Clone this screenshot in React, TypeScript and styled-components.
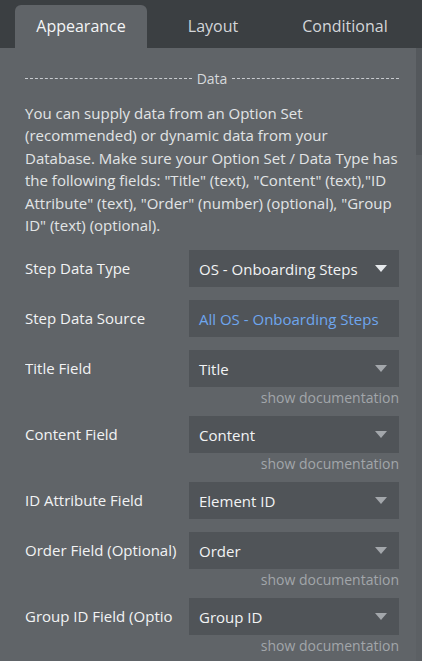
import styled, { createGlobalStyle } from 'styled-components'

const GlobalStyle = createGlobalStyle`
  * {
    box-sizing: border-box;
  }
  body {
    margin: 0;
    background: #606468;
    font-family: "Open Sans", "Noto Sans", sans-serif;
  }
`

interface IField {
  label: string
  value: string
  doc?: boolean
  link?: boolean
  bright?: boolean
  noArrow?: boolean
  clipped?: boolean
}

const fields: IField[] = [
  { label: 'Step Data Type', value: 'OS - Onboarding Steps', bright: true },
  { label: 'Step Data Source', value: 'All OS - Onboarding Steps', link: true, noArrow: true },
  { label: 'Title Field', value: 'Title', doc: true },
  { label: 'Content Field', value: 'Content', doc: true },
  { label: 'ID Attribute Field', value: 'Element ID' },
  { label: 'Order Field (Optional)', value: 'Order', doc: true },
  { label: 'Group ID Field (Optional)', value: 'Group ID', doc: true, clipped: true },
]

const descriptionLines = [
  'You can supply data from an Option Set',
  '(recommended) or dynamic data from your',
  'Database. Make sure your Option Set / Data Type has',
  'the following fields: "Title" (text), "Content" (text),"ID',
  'Attribute" (text), "Order" (number) (optional), "Group',
  'ID" (text) (optional).',
]

function App() {
  return (
    <>
      <GlobalStyle />
      <Wrapper>
        <Tabs>
          {['Appearance', 'Layout', 'Conditional'].map((tab, i) => (
            <Tab key={tab} active={i === 0}>{tab}</Tab>
          ))}
        </Tabs>

        <Body>
          <Panel>
            <Divider>
              <Dashes />
              <span>Data</span>
              <Dashes />
            </Divider>

            <Description>
              {descriptionLines.map(line => (
                <DescriptionLine key={line}>{line}</DescriptionLine>
              ))}
            </Description>

            <Fields>
              {fields.map(field => (
                <FieldBlock key={field.label}>
                  <Row>
                    <Label clipped={field.clipped}>{field.label}</Label>
                    <Dropdown>
                      <DropdownText link={field.link}>{field.value}</DropdownText>
                      {!field.noArrow && <Arrow bright={field.bright} />}
                    </Dropdown>
                  </Row>
                  {field.doc && <DocLink>show documentation</DocLink>}
                </FieldBlock>
              ))}
            </Fields>
          </Panel>

          <Scrollbar>
            <Thumb />
          </Scrollbar>
        </Body>
      </Wrapper>
    </>
  )
}


const Wrapper = styled.div`
  width: 422px;
  height: 661px;
  overflow: hidden;
  display: flex;
  flex-direction: column;
  background: #606468;
`

const Tabs = styled.div`
  height: 48px;
  flex-shrink: 0;
  background: #3b3f42;
  display: flex;
  align-items: flex-end;
  padding-left: 15px;
`

interface ITab {
  active?: boolean
}

const Tab = styled.div<ITab>`
  width: 132px;
  height: 43px;
  display: flex;
  align-items: center;
  justify-content: center;
  padding-bottom: 2px;
  font-size: 16px;
  color: ${props => (props.active ? '#f4f5f6' : '#d3d6d9')};
  background: ${props => (props.active ? '#606468' : 'transparent')};
  border-radius: 6px 6px 0 0;
`

const Body = styled.div`
  flex: 1;
  display: flex;
  min-height: 0;
`

const Panel = styled.div`
  flex: 1;
  padding: 20px 17px 0 25px;
  overflow: hidden;
`

const Scrollbar = styled.div`
  width: 6px;
  background: #5c6064;
  flex-shrink: 0;
`

const Thumb = styled.div`
  height: 107px;
  background: #54585c;
`

const Divider = styled.div`
  display: flex;
  align-items: center;
  gap: 5px;
  font-size: 14px;
  color: #d6d9dc;
  height: 20px;
`

const Dashes = styled.div`
  flex: 1;
  border-top: 1px dashed #c9ccd0;
  margin-top: 1px;
`

const Description = styled.div`
  margin: 14px -6px 0 0;
  font-size: 15px;
  line-height: 22.4px;
  color: #e2e4e6;
`

const DescriptionLine = styled.div`
  white-space: nowrap;
`

const Fields = styled.div`
  margin-top: 14px;
  display: flex;
  flex-direction: column;
  gap: 13px;
`

const FieldBlock = styled.div`
  display: flex;
  flex-direction: column;
`

const Row = styled.div`
  display: flex;
  align-items: center;
`

interface ILabel {
  clipped?: boolean
}

const Label = styled.div<ILabel>`
  width: ${props => (props.clipped ? '148px' : '154px')};
  margin-right: ${props => (props.clipped ? '16px' : '10px')};
  font-size: 15px;
  color: #f2f3f4;
  white-space: nowrap;
  overflow: hidden;
  margin-top: -2px;
`

const Dropdown = styled.div`
  width: 210px;
  height: 37px;
  background: #505458;
  display: flex;
  align-items: center;
  justify-content: space-between;
  padding: 0 12px 0 10px;
`

interface IDropdownText {
  link?: boolean
}

const DropdownText = styled.span<IDropdownText>`
  font-size: 15px;
  color: ${props => (props.link ? '#6ea6ee' : '#f2f3f4')};
  white-space: nowrap;
`

interface IArrow {
  bright?: boolean
}

const Arrow = styled.span<IArrow>`
  width: 0;
  height: 0;
  border-left: 6px solid transparent;
  border-right: 6px solid transparent;
  border-top: 7px solid ${props => (props.bright ? '#e6e9ec' : '#a3a7ab')};
`

const DocLink = styled.div`
  align-self: flex-end;
  font-size: 14px;
  line-height: 22px;
  color: #a2a6aa;
  margin-bottom: -6px;
`

export default App
